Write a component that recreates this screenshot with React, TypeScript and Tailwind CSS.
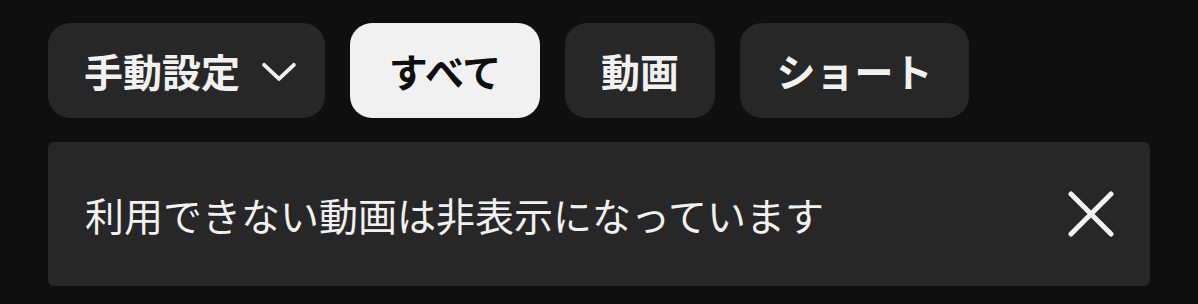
import React from "react";

const chips = [
  { label: "すべて", w: "w-[190px]", active: true },
  { label: "動画", w: "w-[150px]", active: false },
  { label: "ショート", w: "w-[229px]", active: false },
];

export default function App() {
  return (
    <div
      className="w-[1198px] h-[304px] bg-[#0f0f0f] pt-[23px] pl-[48px]"
      style={{ fontFamily: '"Noto Sans CJK JP", "Noto Sans", sans-serif' }}
    >
      <div className="flex gap-[25px]">
        <button className="flex items-center w-[277px] h-[95px] rounded-[22px] bg-[#272727] pl-[36px] text-[39px] font-bold text-[#f1f1f1] leading-none">
          <span>手動設定</span>
          <svg
            className="ml-[18px] w-[42px] h-[42px]"
            viewBox="0 0 24 24"
            fill="none"
            stroke="#f1f1f1"
            strokeWidth="2.2"
            strokeLinecap="round"
            strokeLinejoin="round"
          >
            <path d="M3.5 8.5 12 16.5 20.5 8.5" />
          </svg>
        </button>
        {chips.map((c) => (
          <button
            key={c.label}
            className={
              c.active
                ? `${c.w} h-[95px] rounded-[22px] bg-[#f1f1f1] text-[39px] font-bold text-[#0f0f0f] leading-none`
                : `${c.w} h-[95px] rounded-[22px] bg-[#272727] text-[39px] font-bold text-[#f1f1f1] leading-none`
            }
          >
            {c.label}
          </button>
        ))}
      </div>
      <div className="mt-[24px] w-[1102px] h-[144px] rounded-[6px] bg-[#272727] flex items-center justify-between pl-[37px] pr-[36px]">
        <span className="text-[39px] text-[#f1f1f1] leading-none">
          利用できない動画は非表示になっています
        </span>
        <svg
          className="w-[46px] h-[46px]"
          viewBox="0 0 46 46"
          fill="none"
          stroke="#f1f1f1"
          strokeWidth="5"
          strokeLinecap="round"
        >
          <path d="M3 3 43 43M43 3 3 43" />
        </svg>
      </div>
    </div>
  );
}
